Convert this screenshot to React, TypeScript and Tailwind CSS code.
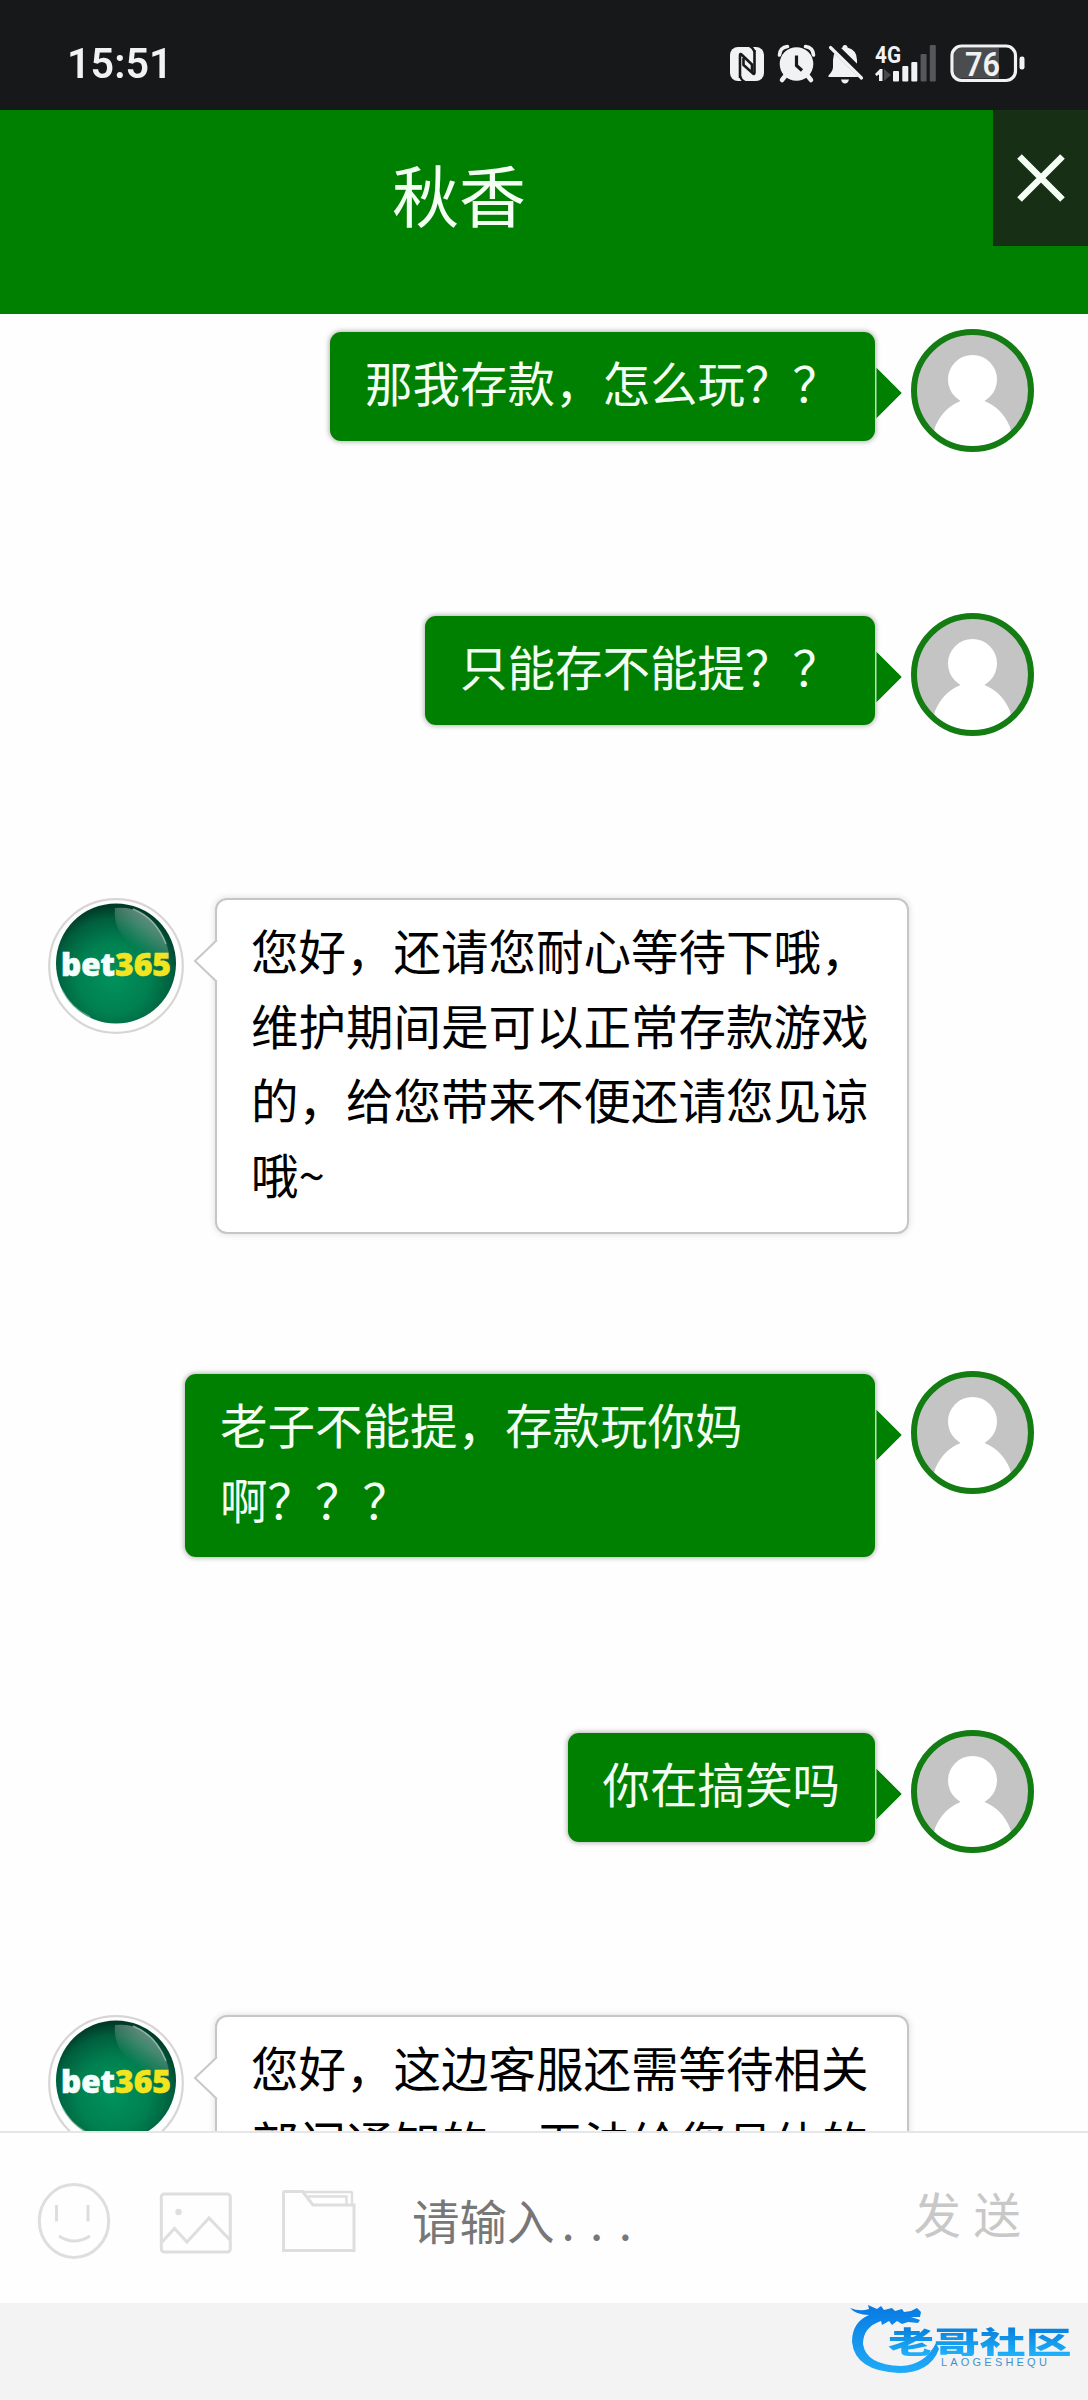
import React from "react";

const CJK = "font-['Noto_Sans_CJK_SC',sans-serif]";

function StatusIcons() {
  return (
    <svg className="block" width="300" height="44" viewBox="728 42 300 44" fill="#f1f2f4">
      {/* NFC */}
      <rect x="730" y="47" width="34" height="34" rx="8" />
      <path d="M740 78 V55.500 Q740 53 742 55 L752 64.500 V72" fill="none" stroke="#17181a" strokeWidth="2.600" />
      <path d="M754.500 50 V72.500 Q754.500 75 752.500 73 L743.500 65 V58" fill="none" stroke="#17181a" strokeWidth="2.600" />
      <path d="M740 76 q1 4 5 6 M754.500 52 q-1 -4 -5 -6" fill="none" stroke="#17181a" strokeWidth="2.200" />
      {/* Alarm */}
      <circle cx="796.500" cy="64" r="16.800" />
      <path d="M779.500 55 Q780 47.500 787.500 46.500 M813.500 55 Q813 47.500 805.500 46.500" fill="none" stroke="#f1f2f4" strokeWidth="3.600" strokeLinecap="round" />
      <path d="M786 75 l-4 5 M807 75 l4 5" stroke="#f1f2f4" strokeWidth="4.500" strokeLinecap="round" />
      <path d="M796.500 55.500 V65.500 L802 70.500" fill="none" stroke="#17181a" strokeWidth="3.200" />
      {/* Muted bell */}
      <path d="M842.500 47.500 Q842.500 45 845 45 T847.500 47.500 Q857 50 857 60 V67 Q857 71 861.500 75.500 V77 H828.500 V75.500 Q833 71 833 67 V60 Q833 50 842.500 47.500 Z" />
      <path d="M841 79.500 H849 Q848 83.500 845 83.500 T841 79.500 Z" />
      <path d="M831 44 L864 76.500" stroke="#17181a" strokeWidth="8.500" />
      <path d="M830.500 47.500 L861.500 78" stroke="#f1f2f4" strokeWidth="3.200" strokeLinecap="round" />
      {/* Mobile signal */}
      <text x="875" y="63" fontFamily="Roboto, sans-serif" fontWeight="700" fontSize="24" textLength="26" lengthAdjust="spacingAndGlyphs">4G</text>
      <path d="M875 74 L880 69 H882.500 V81 H879 V74.500 L876.500 76 Z" />
      <path d="M884 69 L891 75 L884 81 Z" fill="#48494b" />
      <rect x="893" y="71" width="6" height="10.500" rx="1" />
      <rect x="902.300" y="66" width="6" height="15.500" rx="1" />
      <rect x="911.300" y="62" width="6" height="19.500" rx="1" />
      <rect x="920.600" y="54" width="6" height="27.500" rx="1" fill="#56575a" />
      <rect x="929.800" y="45" width="6" height="36.500" rx="1" fill="#56575a" />
      {/* Battery */}
      <path d="M961 47.500 H999 V78.500 H961 Q954 78.500 954 71 V55 Q954 47.500 961 47.500Z" fill="#4b4c4e" />
      <rect x="952" y="46" width="63.500" height="34.500" rx="9.500" fill="none" stroke="#f1f2f4" strokeWidth="3.200" />
      <rect x="1019.500" y="56.500" width="5" height="13" rx="2.300" />
      <text x="965" y="75.500" fontFamily="Roboto, sans-serif" fontWeight="600" fontSize="33" textLength="35" lengthAdjust="spacingAndGlyphs">76</text>
    </svg>
  );
}

function UserAvatar() {
  return (
    <svg className="block shrink-0" width="123" height="123" viewBox="0 0 123 123">
      <defs>
        <clipPath id="user-clip"><circle cx="61.500" cy="61.500" r="56" /></clipPath>
      </defs>
      <circle cx="61.500" cy="61.500" r="57" fill="#c4c4c4" />
      <g clipPath="url(#user-clip)" fill="#fff">
        <circle cx="61.500" cy="50.500" r="24.500" />
        <path d="M49 62 H74 L73.500 72 Q91 79 99 98 L104 123 H19 L24 98 Q32 79 49.500 72 Z" />
      </g>
      <circle cx="61.500" cy="61.500" r="58.500" fill="none" stroke="#137c13" strokeWidth="6" />
    </svg>
  );
}

function AgentAvatar() {
  return (
    <svg className="block shrink-0" width="136" height="136" viewBox="0 0 136 136">
      <defs>
        <radialGradient id="ball" cx="0.48" cy="0.62" r="0.6">
          <stop offset="0" stopColor="#00925c" />
          <stop offset="0.5" stopColor="#008050" />
          <stop offset="0.82" stopColor="#005f3e" />
          <stop offset="1" stopColor="#003a28" />
        </radialGradient>
        <linearGradient id="gloss" x1="0.8" y1="0.15" x2="0.35" y2="0.75">
          <stop offset="0" stopColor="#fff" stopOpacity="0.48" />
          <stop offset="1" stopColor="#fff" stopOpacity="0" />
        </linearGradient>
      </defs>
      <circle cx="68" cy="68" r="66.800" fill="#fdfffe" stroke="#d9d5d5" strokeWidth="2.200" />
      <circle cx="68" cy="65.500" r="60" fill="url(#ball)" />
      <path d="M67 10 Q95 7 112 33 Q122 49 121 62 Q96 61 79 44 Q65 29 67 10 Z" fill="url(#gloss)" />
      <path d="M85 11 Q108 20 118 46" fill="none" stroke="#b9dccb" strokeOpacity="0.6" strokeWidth="1.500" />
      <path d="M14 92 Q23 110 42 119" fill="none" stroke="#8fc7ae" strokeOpacity="0.6" strokeWidth="1.500" />
      <text x="13" y="78" fontFamily="'Open Sans', 'Noto Sans', sans-serif" fontWeight="800" fontSize="31" fill="#f4fffb" stroke="#f4fffb" strokeWidth="0.600" textLength="54" lengthAdjust="spacingAndGlyphs">bet</text>
      <text x="67" y="78" fontFamily="'Open Sans', 'Noto Sans', sans-serif" fontWeight="800" fontSize="31" fill="#f2e41e" stroke="#f2e41e" strokeWidth="0.600" textLength="56" lengthAdjust="spacingAndGlyphs">365</text>
    </svg>
  );
}

function UserMessage({ lines, space, wide = false }: { lines: string[]; space: string; wide?: boolean }) {
  return (
    <div className={`flex shrink-0 items-start justify-end pr-[54px] ${space}`}>
      <div
        className={`mt-[3px] rounded-[11px] bg-[#008000] px-[35px] pt-[13px] pb-[21px] text-[47.5px] leading-[74.5px] whitespace-nowrap text-[#f4fff4] shadow-[0_0_5px_1px_rgba(0,0,0,0.3)] ${wide ? "w-[690px]" : ""}`}
      >
        {lines.map((line) => <p key={line}>{line}</p>)}
      </div>
      <svg className="mt-[36px] mr-[8px] block shrink-0" width="28" height="56" viewBox="0 0 28 56">
        <path d="M1 2 L27 28 L1 54 Z" fill="#008000" stroke="#c5dcc5" strokeWidth="1" />
      </svg>
      <UserAvatar />
    </div>
  );
}

function AgentMessage({ lines, space }: { lines: string[]; space: string }) {
  return (
    <div className={`flex shrink-0 items-start pl-[48px] ${space}`}>
      <AgentAvatar />
      <svg className="relative z-10 mt-[40px] -mr-[3px] ml-[9px] block shrink-0" width="25" height="46" viewBox="0 0 25 46">
        <path d="M24 2 L2 23 L24 44" fill="#fff" stroke="#c8c8c8" strokeWidth="2" />
      </svg>
      <div className="w-[694px] rounded-[12px] border-[2.5px] border-[#c6c6c6] bg-white pt-[13px] pr-[33px] pb-[21px] pl-[34px] text-[47.5px] leading-[74.5px] whitespace-nowrap text-black shadow-[0_0_7px_rgba(0,0,0,0.14)]">
        {lines.map((line) => <p key={line}>{line}</p>)}
      </div>
    </div>
  );
}

function InputIcons() {
  return (
    <div className="flex items-center text-[#dedede]">
      <svg width="74" height="76" viewBox="0 0 74 76" fill="none" stroke="currentColor" strokeWidth="3">
        <ellipse cx="37" cy="38" rx="34.700" ry="36.500" />
        <path d="M19.500 22 V38.500 M51 22 V38.500 M22 53 Q37 63 53 53" />
      </svg>
      <svg className="ml-[48px]" width="74" height="76" viewBox="0 0 74 76" fill="none" stroke="currentColor" strokeWidth="3">
        <rect x="2.300" y="11" width="69" height="58" rx="3" />
        <path d="M3 59 L15.500 45.500 L28 59 L50 35 L71 57" />
        <circle cx="19.500" cy="29" r="3.200" fill="currentColor" stroke="none" />
      </svg>
      <svg className="ml-[48px]" width="76" height="76" viewBox="0 0 76 76" fill="none" stroke="currentColor" strokeWidth="3">
        <path d="M4 8.500 H21.500 L32 22 H73 V67.500 H2.500 V10 Q2.500 8.500 4 8.500 Z" />
        <path d="M22 9 H70 Q71 9 71 10 V22 M27 13.500 H65.500 V21" strokeWidth="2.400" />
      </svg>
    </div>
  );
}

function Watermark() {
  return (
    <div className="relative mt-px mr-[16px] h-[72px] w-[222px]">
      <svg className="absolute top-0 left-0" width="100" height="72" viewBox="0 0 100 72">
        <defs>
          <linearGradient id="dragon" x1="0" y1="0" x2="0" y2="1">
            <stop offset="0" stopColor="#0879e2" />
            <stop offset="1" stopColor="#20acf8" />
          </linearGradient>
        </defs>
        <path
          fill="url(#dragon)"
          d="M0 4 Q10 8 19 5 L18 1 L27 5 L31 2 L34 6 L42 4 L45 7 L52 5 L54 8 L61 7 L67 4 L71 8 L70 13 L61 13 L70 16 L68 19 L58 18 L52 20 L47 17 L42 21 L39 17 L32 21 L31 17 Q13 23 13 40 Q16 61 51 62 Q75 61 86 39 L89 45 Q80 69 49 69 Q5 67 2 38 Q2 18 19 11 Q6 11 0 4 Z"
        />
      </svg>
      <p className="absolute top-[20px] left-[38px] origin-left scale-x-[1.53] bg-linear-to-b from-[#0879d8] to-[#20b2fa] bg-clip-text text-[30px] leading-[32px] font-black whitespace-nowrap text-transparent">
        老哥社区
      </p>
      <p className="absolute top-[52px] left-[91px] font-['Liberation_Sans',sans-serif] text-[11px] leading-[12px] tracking-[3.2px] whitespace-nowrap text-[#3f92d2]">
        LAOGESHEQU
      </p>
    </div>
  );
}

export default function App() {
  return (
    <div className={`flex h-[2400px] w-[1088px] flex-col overflow-hidden bg-white ${CJK}`}>
      <div className="flex h-[110px] shrink-0 items-start justify-between bg-[#17181a] pr-[60px] pl-[67px]">
        <span className="mt-[37px] origin-left scale-x-[0.96] font-['Roboto',sans-serif] text-[43px] leading-[52px] font-semibold text-[#f1f2f4]">15:51</span>
        <div className="mt-[42px]"><StatusIcons /></div>
      </div>

      <header className="flex h-[204px] shrink-0 items-start bg-[#008000]">
        <h1 className="mt-[34px] w-[918px] text-center text-[67px] leading-[98px] text-[#f4fff4]">秋香</h1>
        <button className="ml-auto flex h-[136px] w-[95px] items-center justify-center bg-[#162f15]" aria-label="关闭">
          <svg width="50" height="50" viewBox="0 0 50 50" stroke="#f6fff6" strokeWidth="6.500">
            <path d="M3.500 3.500 L46.500 46.500 M46.500 3.500 L3.500 46.500" />
          </svg>
        </button>
      </header>

      <main className="flex h-[1817px] shrink-0 flex-col overflow-hidden bg-[#fefefe] pt-[15px]">
        <UserMessage space="h-[284px]" lines={["那我存款，怎么玩？？"]} />
        <UserMessage space="h-[285px]" lines={["只能存不能提？？"]} />
        <AgentMessage
          space="h-[473px]"
          lines={["您好，还请您耐心等待下哦，", "维护期间是可以正常存款游戏", "的，给您带来不便还请您见谅", "哦~"]}
        />
        <UserMessage wide space="h-[359px]" lines={["老子不能提，存款玩你妈", "啊？？？"]} />
        <UserMessage space="h-[285px]" lines={["你在搞笑吗"]} />
        <AgentMessage space="h-[473px]" lines={["您好，这边客服还需等待相关", "部门通知的，无法给您具体的"]} />
      </main>

      <div className="flex h-[172px] shrink-0 items-start border-t-2 border-[#e6e6e6] bg-[#fefefe] pr-[67px] pl-[37px]">
        <div className="mt-[50px]"><InputIcons /></div>
        <p className="mt-[50px] ml-[55px] text-[47.5px] leading-[74px] text-[#777777]">
          请输入<span className="ml-[7px] tracking-[15.4px]">...</span>
        </p>
        <button className="mt-[43px] ml-auto flex gap-[12.5px] text-[47.5px] leading-[74px] text-[#c8c8c8]">
          <span>发</span>
          <span>送</span>
        </button>
      </div>

      <footer className="flex flex-1 items-start justify-end bg-[#f3f3f3]">
        <Watermark />
      </footer>
    </div>
  );
}
